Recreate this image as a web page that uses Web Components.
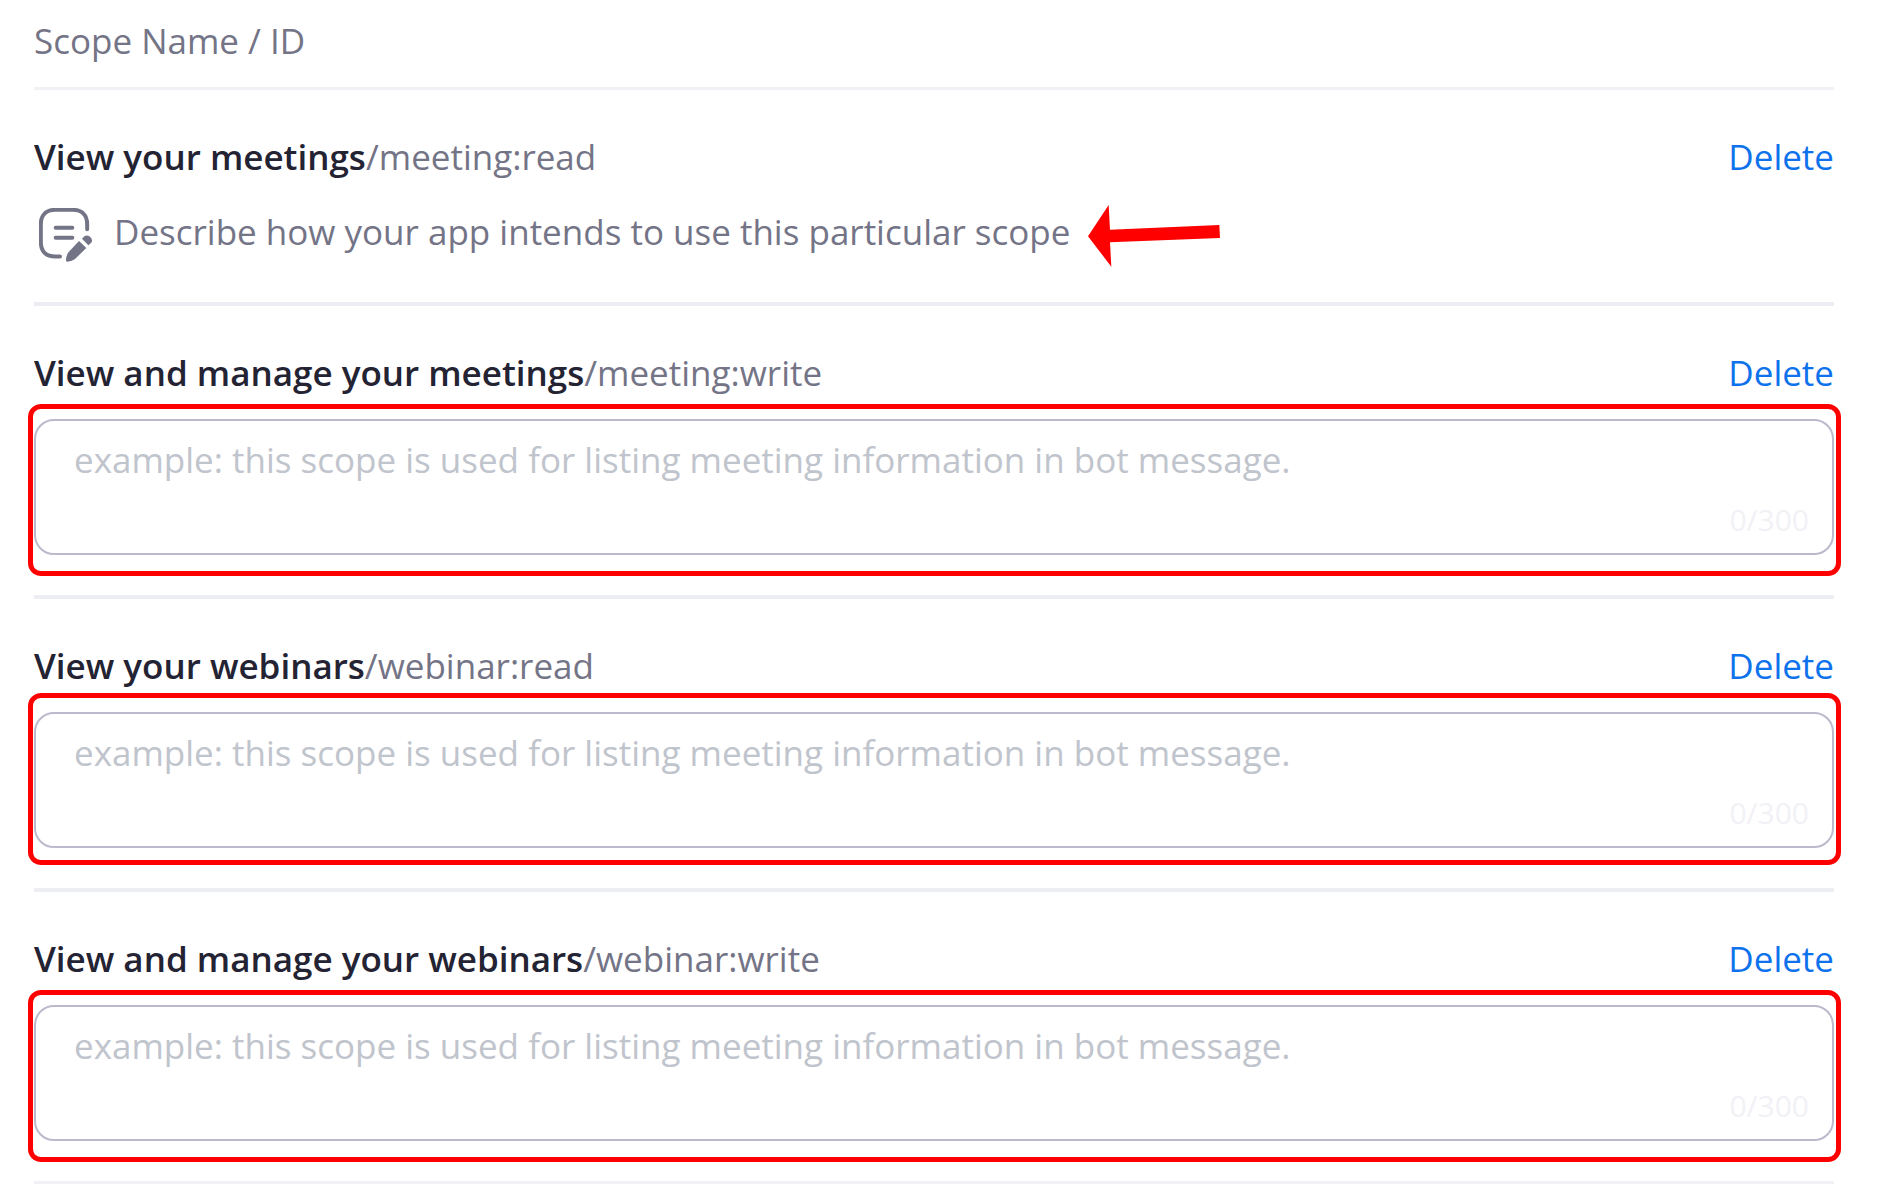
<!DOCTYPE html>
<html lang="en">
<head>
<meta charset="utf-8">
<title>Scopes</title>
<style>
  body { margin: 0; background: #fff; color: #747487; font: 35px/48px "Open Sans", "Noto Sans", sans-serif; }
</style>
</head>
<body>
<scope-list>
  <span slot="heading">Scope Name / ID</span>
  <scope-row name="View your meetings" scope="meeting:read">
    <scope-note>Describe how your app intends to use this particular scope</scope-note>
  </scope-row>
  <scope-row name="View and manage your meetings" scope="meeting:write">
    <scope-field label="View and manage your meetings"></scope-field>
  </scope-row>
  <scope-row name="View your webinars" scope="webinar:read">
    <scope-field label="View your webinars" marker="high"></scope-field>
  </scope-row>
  <scope-row name="View and manage your webinars" scope="webinar:write" last>
    <scope-field label="View and manage your webinars"></scope-field>
  </scope-row>
</scope-list>

<template id="list-template">
  <style>
    :host { display: block; padding: 17px 53px 0 34px; }
    header { padding-bottom: 22px; border-bottom: 3px solid #f1f1f6; }
  </style>
  <header><slot name="heading"></slot></header>
  <main><slot></slot></main>
</template>

<template id="row-template">
  <style>
    :host { display: block; padding: 43px 0 40px; border-bottom: 4px solid #ededf4; }
    :host([last]) { border-bottom: 3px solid #f1f1f6; }
    .title { display: flex; justify-content: space-between; align-items: baseline; }
    h2 { margin: 0; font: inherit; }
    strong { color: #232333; font-weight: 600; }
    button { padding: 0; border: 0; background: none; color: #0e72ed; font: inherit; cursor: pointer; }
  </style>
  <div class="title">
    <h2><strong></strong><span></span></h2>
    <button type="button">Delete</button>
  </div>
  <slot></slot>
</template>

<template id="note-template">
  <style>
    :host { display: flex; padding: 27px 0 6px 5px; }
    button { position: relative; display: flex; gap: 22px; height: 48px; padding: 0; border: 0; background: none; color: inherit; font: inherit; cursor: pointer; }
    .icon { width: 53px; height: 54px; flex: none; }
    .arrow { position: absolute; left: 100%; top: -3px; margin-left: 18px; width: 132px; height: 62px; }
  </style>
  <button type="button">
    <svg class="icon" viewBox="57 51 159 162" aria-hidden="true">
      <g fill="none" stroke="#747487" stroke-width="12" stroke-linecap="round">
        <path d="M201.5 115V100C201.5 72 186 56.5 158 56.5H106C78 56.5 62.5 72 62.5 100V153C62.5 181 78 196.5 106 196.5H120"/>
        <path d="M107 110.500H157M107 140.500H157"/>
      </g>
      <path fill="#747487" d="M177 150L199 171L165 204Q157 211 143 212Q137 213 138 206Q139 192 146 183ZM186 143L194 135Q201 131 208 136Q217 142 216 150Q216 154 212 157L205 163Z"/>
    </svg>
    <span><slot></slot></span>
    <svg class="arrow" viewBox="84 42 396 186" aria-hidden="true"><path fill="#f00" d="M84 136L146 42L150 116L478 102L480 141L150 154L154 227Z"/></svg>
  </button>
</template>

<template id="field-template">
  <style>
    :host { display: block; position: relative; margin-top: 22px; }
    textarea { display: block; box-sizing: border-box; width: 100%; height: 136px; margin: 0; padding: 15px 38px; border: 2px solid #babacc; border-radius: 20px; outline: 0; resize: none; overflow: hidden; background: #fff; color: #232333; font: inherit; }
    textarea::placeholder { color: #c0c4cc; opacity: 1; }
    .count { position: absolute; right: 25px; bottom: 15px; color: #f1f1f6; font-size: 30px; line-height: 41px; }
    .marker { position: absolute; top: -15px; left: -6px; right: -7px; height: 172px; box-sizing: border-box; border: 5px solid #f00; border-radius: 13px; pointer-events: none; }
    :host([marker="high"]) .marker { top: -19px; }
  </style>
  <textarea maxlength="300" placeholder="example: this scope is used for listing meeting information in bot message."></textarea>
  <span class="count">0/300</span>
  <div class="marker"></div>
</template>

<script>
  class TemplateElement extends HTMLElement {
    constructor() {
      super();
      const template = document.getElementById(this.constructor.template);
      this.attachShadow({ mode: "open" }).append(template.content.cloneNode(true));
    }
  }

  class ScopeList extends TemplateElement {
    static template = "list-template";
  }

  class ScopeRow extends TemplateElement {
    static template = "row-template";
    connectedCallback() {
      this.shadowRoot.querySelector("strong").textContent = this.getAttribute("name");
      this.shadowRoot.querySelector("h2 span").textContent = "/" + this.getAttribute("scope");
      this.shadowRoot.querySelector("button").onclick = () => this.remove();
    }
  }

  class ScopeNote extends TemplateElement {
    static template = "note-template";
  }

  class ScopeField extends TemplateElement {
    static template = "field-template";
    connectedCallback() {
      const area = this.shadowRoot.querySelector("textarea");
      area.setAttribute("aria-label", this.getAttribute("label"));
      area.oninput = () => {
        this.shadowRoot.querySelector(".count").textContent = area.value.length + "/300";
      };
    }
  }

  customElements.define("scope-list", ScopeList);
  customElements.define("scope-row", ScopeRow);
  customElements.define("scope-note", ScopeNote);
  customElements.define("scope-field", ScopeField);
</script>
</body>
</html>
